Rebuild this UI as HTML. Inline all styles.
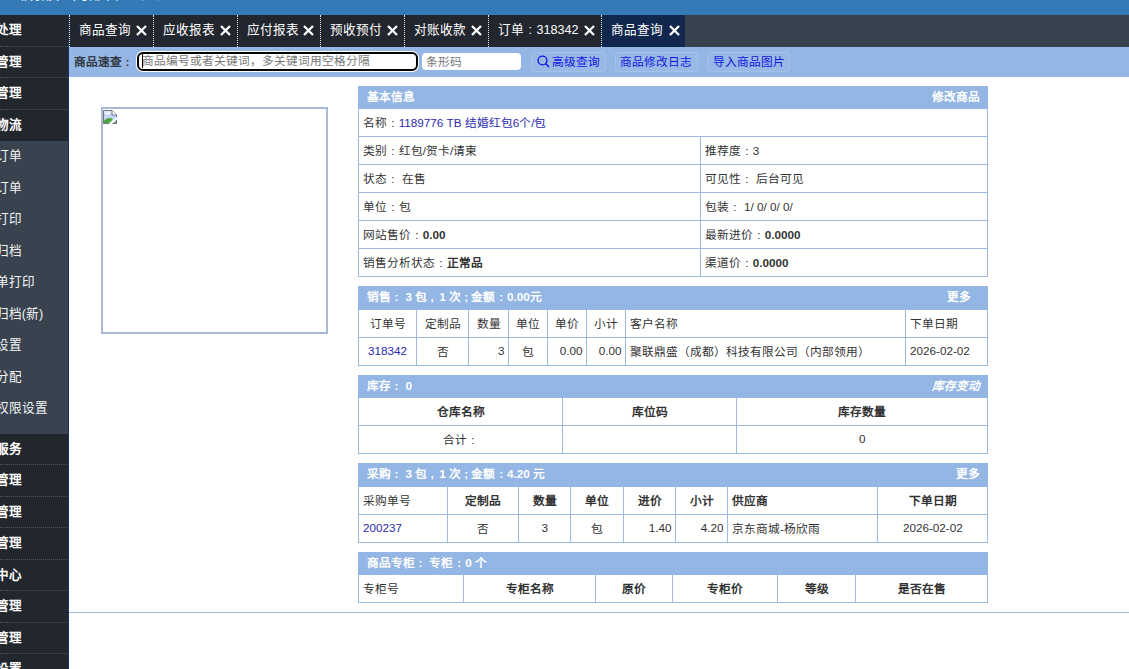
<!DOCTYPE html>
<html lang="zh-CN">
<head>
<meta charset="utf-8">
<title>商品查询</title>
<style>
*{box-sizing:border-box;margin:0;padding:0}
html,body{width:1129px;height:669px;overflow:hidden;background:#fff}
body{font-family:"Liberation Sans",sans-serif;font-size:11.7px;color:#333;position:relative}
a{text-decoration:none;color:#2a2ab0}
#top{position:absolute;left:0;top:0;width:1129px;height:15px;background:#337ab7;overflow:hidden}
#top span{position:absolute;left:8px;top:-14.5px;color:#fff;font-size:16px;line-height:16px;font-weight:normal;white-space:nowrap}
#side{position:absolute;left:0;top:15px;width:69px;height:654px;background:#22272e;border-right:1px solid #173260;overflow:hidden;color:#fff;font-size:12.6px}
#side .m{height:31.5px;line-height:30.5px;border-bottom:1px dotted #4c545f;font-weight:bold;white-space:nowrap;position:relative}
#side .m span,#side .s span{position:absolute;left:-30.2px;top:0}
#side .m.open{border-bottom:none}
#side .sub{background:#38434f;padding:0 0 9px 0}
#side .s{height:31.5px;line-height:31.5px;white-space:nowrap;position:relative;color:#f4f4f4}
#tabs{position:absolute;left:69px;top:15px;width:1060px;height:31.5px;background:#38424e;color:#fff;font-size:12.6px;white-space:nowrap}
#tabs .t{position:absolute;top:0;height:31.5px;line-height:31px;background:#22262e;border-left:1px dotted #e8e8e8;padding-left:9px}
#tabs .t.on{background:#12274d}
#tabs .t svg{position:absolute;right:6px;top:10px}
#bar{position:absolute;left:69px;top:46.5px;width:1060px;height:30.5px;background:#94b6e4}
#main{position:absolute;left:69px;top:77px;width:1060px;height:592px;background:#fff}

#bar .lb{position:absolute;left:4.7px;top:0;line-height:30px;font-weight:bold;color:#333a45;font-size:11.7px;white-space:nowrap}
#bar .i1{position:absolute;left:67.5px;top:5.5px;width:281px;height:18.5px;background:#fff;border:2px solid #000;border-radius:6px;box-shadow:0 0 0 1px #fff;color:#777;line-height:14.5px;padding-left:3.5px;white-space:nowrap;overflow:hidden}
#bar .i1 i{position:absolute;left:3px;top:0;width:1px;height:14px;background:#000}
#bar .i2{position:absolute;left:353px;top:6.2px;width:98.5px;height:17.6px;background:#fff;border-radius:4px;color:#777;line-height:17.6px;padding-left:4px;white-space:nowrap}
#bar .b{position:absolute;top:5.5px;height:19.5px;line-height:18px;border:1px solid #a6c2ea;border-radius:3px;background:#98b9e6;color:#1414e0;text-align:center;white-space:nowrap;font-size:11.7px}
#bar .b svg{vertical-align:-2px;margin-right:2px}
#img{position:absolute;left:32px;top:30px;width:227px;height:227px;border:2px solid #a9b9d3;background:#fff}
table{position:absolute;left:289px;width:629px;border-collapse:collapse;table-layout:fixed;font-size:11.7px;color:#333}
td,th{border:1px solid #9cb9e2;height:28px;padding:0 3.5px 2px 4px;white-space:nowrap;overflow:hidden;font-weight:normal;text-align:left;vertical-align:middle}
tr.h td{height:22.5px;background:#94b6e4;color:#fff;font-weight:bold;border-color:#94b6e4;padding:0 7.5px 4px 7.5px}
tr.h td span{float:right}
.c{text-align:center}.r{text-align:right}
th.bd,td.bd,b{font-weight:bold}
#ln{position:absolute;left:0;top:535px;width:1060px;height:1px;background:#9cb9e2}
.co{display:inline-block;width:1em;text-align:center;font-style:normal}
#img svg{position:absolute;left:-1px;top:0}
.h23 tr.h td{height:23px}.h223 tr.h td{height:22.3px}.h235 tr.h td{height:23.5px}.h22 tr.h td{height:22px}
.t1 td{height:27.95px}
#tabs .t.on svg{right:5.5px}
u{text-decoration:none;margin-left:2.3px}
</style>
</head>
<body>
<div id="top"><span>（成都）内部管理系统</span></div>
<div id="side">
<div class="m"><span>订单处理</span></div>
<div class="m"><span>商品管理</span></div>
<div class="m"><span>采购管理</span></div>
<div class="m open"><span>仓储物流</span></div>
<div class="sub">
<div class="s"><span>拣货订单</span></div>
<div class="s"><span>发货订单</span></div>
<div class="s"><span>批量打印</span></div>
<div class="s"><span>订单归档</span></div>
<div class="s"><span>快递单打印</span></div>
<div class="s"><span>订单归档(新)</span></div>
<div class="s"><span>仓库设置</span></div>
<div class="s"><span>库位分配</span></div>
<div class="s"><span>数据权限设置</span></div>
</div>
<div class="m"><span>客户服务</span></div>
<div class="m"><span>财务管理</span></div>
<div class="m"><span>报表管理</span></div>
<div class="m"><span>系统管理</span></div>
<div class="m"><span>数据中心</span></div>
<div class="m"><span>会员管理</span></div>
<div class="m"><span>权限管理</span></div>
<div class="m"><span>系统设置</span></div>
</div>
<div id="tabs">
<div class="t" style="left:0px;width:84px">商品查询<svg width="11" height="11" viewBox="0 0 11 11"><path d="M1 1L10 10M10 1L1 10" stroke="#fff" stroke-width="2.3" fill="none"/></svg></div>
<div class="t" style="left:84px;width:84px">应收报表<svg width="11" height="11" viewBox="0 0 11 11"><path d="M1 1L10 10M10 1L1 10" stroke="#fff" stroke-width="2.3" fill="none"/></svg></div>
<div class="t" style="left:168px;width:83px">应付报表<svg width="11" height="11" viewBox="0 0 11 11"><path d="M1 1L10 10M10 1L1 10" stroke="#fff" stroke-width="2.3" fill="none"/></svg></div>
<div class="t" style="left:251px;width:84px">预收预付<svg width="11" height="11" viewBox="0 0 11 11"><path d="M1 1L10 10M10 1L1 10" stroke="#fff" stroke-width="2.3" fill="none"/></svg></div>
<div class="t" style="left:335px;width:84px">对账收款<svg width="11" height="11" viewBox="0 0 11 11"><path d="M1 1L10 10M10 1L1 10" stroke="#fff" stroke-width="2.3" fill="none"/></svg></div>
<div class="t" style="left:419px;width:113px">订单<i class="co">:</i>318342<svg width="11" height="11" viewBox="0 0 11 11"><path d="M1 1L10 10M10 1L1 10" stroke="#fff" stroke-width="2.3" fill="none"/></svg></div>
<div class="t on" style="left:532px;width:84px">商品查询<svg width="11" height="11" viewBox="0 0 11 11"><path d="M1 1L10 10M10 1L1 10" stroke="#fff" stroke-width="2.3" fill="none"/></svg></div>
</div>
<div id="bar">
<div class="lb">商品速查<i class="co">:</i></div>
<div class="i1"><i></i>商品编号或者关键词，多关键词用空格分隔</div>
<div class="i2">条形码</div>
<div class="b" style="left:462px;width:75px"><svg width="13" height="13" viewBox="0 0 13 13"><circle cx="5.5" cy="5.5" r="4.4" fill="none" stroke="#1414e0" stroke-width="1.4"/><path d="M8.8 8.8L12 12" stroke="#1414e0" stroke-width="1.6"/></svg>高级查询</div>
<div class="b" style="left:545.5px;width:83px">商品修改日志</div>
<div class="b" style="left:638px;width:83px">导入商品图片</div>
</div>
<div id="main">
<div id="img"><svg width="16" height="16" viewBox="0 0 16 16">
<path d="M1.5 1.5H10L14.5 6V14.5H1.5Z" fill="#dfe8fb"/>
<path d="M1.5 4.5H10V6H14.5V9L8 14.5H1.5Z" fill="#c3d6f6"/>
<ellipse cx="5.5" cy="4.6" rx="2.6" ry="1.1" fill="#f4f8ff"/>
<path d="M1.5 14.5V12.5C3 10 6 8.6 9 9.2L11 10.5L6.5 14.5Z" fill="#4ea63a"/>
<path d="M1.5 1.5H10L14.5 6V14.5H1.5Z" fill="none" stroke="#6f7787" stroke-width="1"/>
<path d="M10 1.5V6H14.5" fill="#fff" stroke="#6f7787" stroke-width="1"/>
<path d="M6 15.5L15.5 7.5L15.5 10L9.5 15.5Z" fill="#fff"/>
<path d="M10.5 14.5H14.5V11" fill="none" stroke="#6f7787" stroke-width="1"/>
<path d="M11.5 14L14 11.8V14Z" fill="#6b8a5c"/>
</svg></div>
<table style="top:8.5px" class="t1"><colgroup><col style="width:342px"><col style="width:287px"></colgroup>
<tr class="h"><td colspan="2">基本信息<span>修改商品</span></td></tr>
<tr><td colspan="2">名称<i class="co">:</i><a>1189776 TB 结婚红包6个/包</a></td></tr>
<tr><td>类别<i class="co">:</i>红包/贺卡/请柬</td><td>推荐度<i class="co">:</i>3</td></tr>
<tr><td>状态<i class="co">:</i> 在售</td><td>可见性<i class="co">:</i> 后台可见</td></tr>
<tr><td>单位<i class="co">:</i>包</td><td>包装<i class="co">:</i> 1/ 0/ 0/ 0/</td></tr>
<tr><td>网站售价<i class="co">:</i><b>0.00</b></td><td>最新进价<i class="co">:</i><b>0.0000</b></td></tr>
<tr><td>销售分析状态<i class="co">:</i><b>正常品</b></td><td>渠道价<i class="co">:</i><b>0.0000</b></td></tr>
</table>
<table style="top:208.8px" class="h23"><colgroup><col style="width:57.5px"><col style="width:52.5px"><col style="width:40px"><col style="width:39px"><col style="width:39px"><col style="width:39px"><col style="width:280px"><col style="width:82px"></colgroup>
<tr class="h"><td colspan="8">销售<i class="co">:</i> 3 包 , <u>1</u> 次 ; 金额<i class="co">:</i>0.00元<span style="margin-right:9px">更多</span></td></tr>
<tr><th class="c">订单号</th><th class="c">定制品</th><th class="c">数量</th><th class="c">单位</th><th class="c">单价</th><th class="c">小计</th><th>客户名称</th><th>下单日期</th></tr>
<tr><td class="c"><a>318342</a></td><td class="c">否</td><td class="r">3</td><td class="c">包</td><td class="r">0.00</td><td class="r">0.00</td><td>聚联鼎盛（成都）科技有限公司（内部领用）</td><td>2026-02-02</td></tr>
</table>
<table style="top:297.8px" class="h223"><colgroup><col style="width:204px"><col style="width:174px"><col style="width:251px"></colgroup>
<tr class="h"><td colspan="3">库存<i class="co">:</i> 0<span style="font-style:italic">库存变动</span></td></tr>
<tr><th class="c bd">仓库名称</th><th class="c bd">库位码</th><th class="c bd">库存数量</th></tr>
<tr><td class="c">合计<i class="co">:</i></td><td></td><td class="c">0</td></tr>
</table>
<table style="top:385.6px" class="h235"><colgroup><col style="width:89px"><col style="width:71px"><col style="width:52px"><col style="width:53px"><col style="width:52px"><col style="width:52px"><col style="width:150px"><col style="width:110px"></colgroup>
<tr class="h"><td colspan="8">采购<i class="co">:</i> 3 包 , <u>1</u> 次 ; 金额<i class="co">:</i>4.20 元<span>更多</span></td></tr>
<tr><th>采购单号</th><th class="c bd">定制品</th><th class="c bd">数量</th><th class="c bd">单位</th><th class="c bd">进价</th><th class="c bd">小计</th><th class="bd">供应商</th><th class="c bd">下单日期</th></tr>
<tr><td><a>200237</a></td><td class="c">否</td><td class="c">3</td><td class="c">包</td><td class="r">1.40</td><td class="r">4.20</td><td>京东商城-杨欣雨</td><td class="c">2026-02-02</td></tr>
</table>
<table style="top:474.9px" class="h22"><colgroup><col style="width:105px"><col style="width:132px"><col style="width:77px"><col style="width:105px"><col style="width:78px"><col style="width:132px"></colgroup>
<tr class="h"><td colspan="6">商品专柜<i class="co">:</i> 专柜<i class="co">:</i>0 个</td></tr>
<tr><th>专柜号</th><th class="c bd">专柜名称</th><th class="c bd">原价</th><th class="c bd">专柜价</th><th class="c bd">等级</th><th class="c bd">是否在售</th></tr>
</table>
<div id="ln"></div>
</div>
</body>
</html>
